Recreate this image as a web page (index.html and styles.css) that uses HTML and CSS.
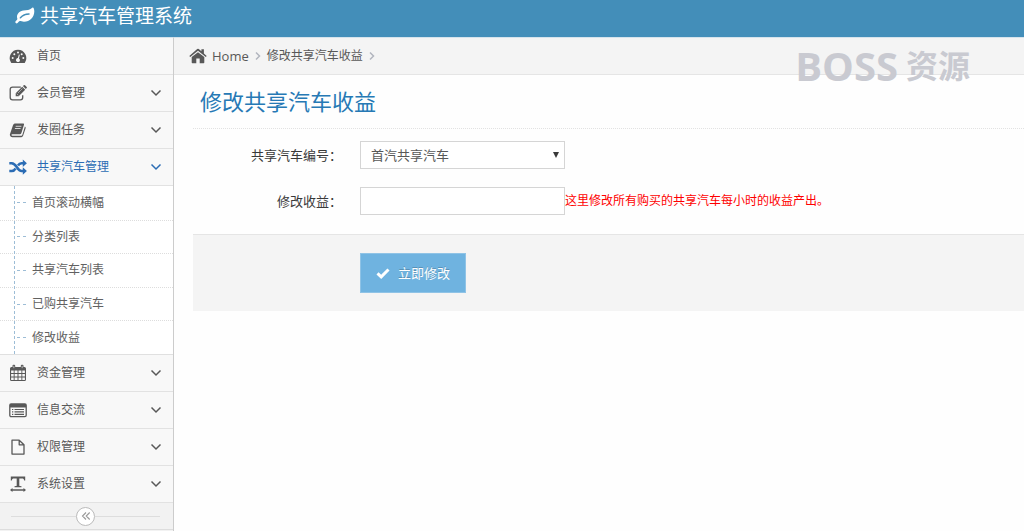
FILE: index.html
```html
<!DOCTYPE html>
<html lang="zh-CN">
<head>
<meta charset="utf-8">
<meta name="viewport" content="width=device-width, initial-scale=1">
<title>共享汽车管理系统</title>
<link rel="stylesheet" href="styles.css">
</head>
<body>
<svg class="sprite" aria-hidden="true">
  <symbol id="chevron" viewBox="0 0 12 12"><path d="M1.500 3.500 6 8l4.500-4.500" fill="none" stroke="currentColor" stroke-width="1.500"/></symbol>
  <symbol id="angle" viewBox="0 0 6 10"><path d="M1 1.500 4.500 5 1 8.500" fill="none" stroke="currentColor" stroke-width="1.500"/></symbol>
</svg>

<header class="navbar">
  <a class="brand" href="#">
    <svg class="leaf" viewBox="0 0 20 18" aria-hidden="true"><path fill="currentColor" fill-rule="evenodd" d="M17.800.5c.9 0 1.500 2 1.500 4 0 5.800-4.500 10.300-10.300 10.300-1.700 0-3.200-.7-4.200-.7-1.200 0-1.900 2.400-3 2.400C1 16.500.3 15.600.3 15c0-1.200 2.100-2 2.100-3C2.400 11.700 2 10.800 2 9.800c0-3.600 3-5.700 6.400-6.300C11.500 3 15 3.300 16.600 1.300c.4-.4.6-.8 1.200-.8ZM14 6.300c-4.200.1-6.500 1.300-9.100 4-.6.700-.1 1.600.7 1.200.4-.2 1.400-1.300 1.900-1.700 2-1.500 3.700-2 6.500-2.100 1-.1 1-1.400 0-1.400Z"/></svg>
    <span>共享汽车管理系统</span>
  </a>
</header>

<div class="layout">
  <aside class="sidebar">
    <nav>
      <ul class="menu">
        <li><a class="item" href="#">
          <svg class="icon" viewBox="0 0 18 18" aria-hidden="true"><path fill="currentColor" d="M2 15.500A8.300 8.300 0 0 1 9 2.800a8.300 8.300 0 0 1 7 12.700q-.3.500-.8.500H2.800q-.5 0-.8-.5Z"/><g fill="#f8f8f8"><circle cx="3.700" cy="11" r="1"/><circle cx="5.300" cy="7.300" r="1"/><circle cx="9" cy="5.600" r="1"/><circle cx="12.700" cy="7.300" r="1"/><circle cx="14.300" cy="11" r="1"/><path d="m9.900 7.500.9.300-.8 3.600a2 2 0 1 1-1.100-.3Z"/></g></svg>
          <span>首页</span></a></li>
        <li><a class="item" href="#">
          <svg class="icon" viewBox="0 0 18 18" aria-hidden="true"><path fill="none" stroke="currentColor" stroke-width="1.300" d="M11.800 3.200H3.600Q1.200 3.200 1.200 5.500v8q0 2.300 2.400 2.300h7.800q2.300 0 2.300-2.300v-2.200"/><path fill="currentColor" d="m6.700 9.300 6.500-6.500 3 3-6.500 6.500h-3Zm7.200-7.200.9-.9q.6-.5 1.200 0l1.700 1.700q.5.600 0 1.200l-.9.900Z"/><path fill="none" stroke="#f8f8f8" stroke-width=".5" d="m9 9 4.500-4.500M7.700 9.700l1.600 1.600"/></svg>
          <span>会员管理</span><svg class="chevron"><use href="#chevron"/></svg></a></li>
        <li><a class="item" href="#">
          <svg class="icon" viewBox="0 0 18 18" aria-hidden="true"><path fill="currentColor" d="M5.600 2.500h8.600q1.200 0 .8 1.200l-2.700 8.500q-.4 1-1.400 1H3.300q-.8 0-.9.600 0 .9 1.200.9h8.800q.7 0 .9-.7l2.600-8.400q1.100.5.700 1.700l-2.500 7.500q-.5 1.400-1.800 1.400H3.400q-2 0-2.500-2-.2-.8.200-1.500l2.800-8.300q.4-1.500 1.700-1.900Z"/><path fill="none" stroke="#f8f8f8" stroke-width=".8" d="M6.700 5.300h5.700M5.900 7.500h5.700"/></svg>
          <span>发圈任务</span><svg class="chevron"><use href="#chevron"/></svg></a></li>
        <li>
          <a class="item active" href="#">
          <svg class="icon" viewBox="0 0 18 18" aria-hidden="true"><path fill="none" stroke="currentColor" stroke-width="2.500" d="M.3 5.200h2.400C7.800 5.200 8 13 12.500 13H15M.3 13h2.400c2 0 3-1 3.900-2.500M9 7.500c.8-1.300 1.700-2.300 3.500-2.300H15"/><path fill="currentColor" d="m13.800 1.500 4.100 3.700-4.100 3.700Zm0 7.800 4.100 3.700-4.100 3.700Z"/></svg>
          <span>共享汽车管理</span><svg class="chevron"><use href="#chevron"/></svg></a>
          <ul class="submenu">
            <li><a href="#">首页滚动横幅</a></li>
            <li><a href="#">分类列表</a></li>
            <li><a href="#">共享汽车列表</a></li>
            <li><a href="#">已购共享汽车</a></li>
            <li><a href="#">修改收益</a></li>
          </ul>
        </li>
        <li><a class="item" href="#">
          <svg class="icon" viewBox="0 0 18 18" aria-hidden="true"><path fill="currentColor" fill-rule="evenodd" d="M2.500 3h1V1.700Q3.500.8 4.500.8h.7q1 0 1 .9V3h5.600V1.700q0-.9 1-.9h.7q1 0 1 .9V3h1q1.500 0 1.500 1.500v11q0 1.500-1.500 1.500h-13Q1 17 1 15.500v-11Q1 3 2.500 3ZM2.100 6.500v2.600h2.600V6.500Zm3.500 0v2.600h2.900V6.500Zm3.900 0v2.600h2.900V6.500Zm3.800 0v2.600h2.600V6.500ZM2.100 10v2.600h2.600V10Zm3.500 0v2.600h2.900V10Zm3.900 0v2.600h2.900V10Zm3.800 0v2.600h2.600V10ZM2.100 13.500v2.400h2.600v-2.400Zm3.500 0v2.400h2.900v-2.400Zm3.900 0v2.400h2.900v-2.400Zm3.800 0v2.400h2.600v-2.400Z"/><path stroke="#f8f8f8" stroke-width=".6" d="M4.850 1.800v2.400m8.300-2.400v2.400"/></svg>
          <span>资金管理</span><svg class="chevron"><use href="#chevron"/></svg></a></li>
        <li><a class="item" href="#">
          <svg class="icon" viewBox="0 0 18 18" aria-hidden="true"><rect x=".8" y="3" width="16.400" height="12.600" rx="1.300" fill="none" stroke="currentColor" stroke-width="1.300"/><path fill="currentColor" d="M1 3h16v3.500H1Z"/><path stroke="currentColor" stroke-width="1.200" d="M3 8.500h1.300m1.200 0H15M3 10.900h1.300m1.200 0H15M3 13.300h1.300m1.200 0H15"/></svg>
          <span>信息交流</span><svg class="chevron"><use href="#chevron"/></svg></a></li>
        <li><a class="item" href="#">
          <svg class="icon" viewBox="0 0 18 18" aria-hidden="true"><path fill="none" stroke="currentColor" stroke-width="1.300" stroke-linejoin="round" d="M3 2.200h7.200l4.800 4.600v9.300H3Zm7.200 0v4.600H15"/></svg>
          <span>权限管理</span><svg class="chevron"><use href="#chevron"/></svg></a></li>
        <li><a class="item" href="#">
          <svg class="icon" viewBox="0 0 18 18" aria-hidden="true"><path fill="currentColor" d="M1.800 1.600h14.400v3.900h-1q-.4-2-1.400-2h-3.500v6.700q0 .8.700.9l1.500.2v.9h-7v-.9l1.500-.2q.7-.1.700-.9V3.500H4.200q-1 0-1.400 2h-1ZM1 15l2.500-2v1.300h11V13l2.500 2-2.500 2v-1.300h-11V17Z"/></svg>
          <span>系统设置</span><svg class="chevron"><use href="#chevron"/></svg></a></li>
      </ul>
    </nav>
    <div class="collapse">
      <button type="button" aria-label="收起菜单"><svg viewBox="0 0 10 10" aria-hidden="true"><path d="M5 1.500 1.500 5 5 8.500M8.700 1.500 5.200 5l3.500 3.500" fill="none" stroke="currentColor" stroke-width="1.100"/></svg></button>
    </div>
  </aside>

  <main class="main">
    <nav class="breadcrumb" aria-label="位置">
      <svg class="home" viewBox="0 0 18 18" aria-hidden="true"><path fill="currentColor" d="M9 5.200 15.300 10v5.500q0 .7-.7.700h-3.900v-4.700H7.300v4.700H3.400q-.7 0-.7-.7V10ZM.3 8.900 8.200 2.100q.8-.6 1.600 0l2.600 2.200V2.200h2.500v4.300l2.800 2.400-.9 1.200L9 3.800 1.200 10.100Z"/></svg>
      <a href="#">Home</a>
      <svg class="angle"><use href="#angle"/></svg>
      <a class="page" href="#">修改共享汽车收益</a>
      <svg class="angle"><use href="#angle"/></svg>
    </nav>
    <div class="content">
      <h1>修改共享汽车收益</h1>
      <form>
        <div class="row">
          <label for="car">共享汽车编号：</label>
          <div class="select-wrap">
            <select id="car"><option>首汽共享汽车</option></select>
            <svg class="arrow" viewBox="0 0 6 6" aria-hidden="true"><path d="M0 0h6L3 6Z" fill="currentColor"/></svg>
          </div>
        </div>
        <div class="row">
          <label for="income">修改收益：</label>
          <input id="income" type="text" aria-describedby="hint">
          <span class="hint" id="hint">这里修改所有购买的共享汽车每小时的收益产出。</span>
        </div>
        <div class="actions">
          <button class="submit" type="button">
            <svg viewBox="0 0 14 14" aria-hidden="true"><path d="m1.500 7.300 3.700 3.500L12.500 3.500" fill="none" stroke="currentColor" stroke-width="3"/></svg>
            <span>立即修改</span>
          </button>
        </div>
      </form>
    </div>
  </main>
</div>
<div class="watermark"><span>BOSS</span><span class="cjk">资源</span></div>
</body>
</html>
```

FILE: styles.css
```css
* { box-sizing: border-box; }
body {
  margin: 0;
  min-height: 100vh;
  display: flex;
  flex-direction: column;
  position: relative;
  background: #fefefe;
  color: #585858;
  font: 12px/18px "Open Sans", "Noto Sans CJK SC", sans-serif;
}
a { color: inherit; text-decoration: none; }
ul { list-style: none; margin: 0; padding: 0; }
svg { flex: none; }
.sprite { display: none; }

.navbar {
  height: 37px;
  padding: 0 15px;
  display: flex;
  align-items: center;
  background: #438eb9;
}
.brand {
  display: flex;
  align-items: center;
  gap: 5px;
  padding-bottom: 5px;
  color: #fff;
  font-size: 19px;
  line-height: 28px;
}
.leaf { width: 20px; height: 18px; }

.layout { flex: 1; display: flex; }
.sidebar {
  width: 174px;
  flex: none;
  background: #f2f2f2;
  border-right: 1px solid #ccc;
  border-top: 1px solid #d5e3ec;
}
.item {
  height: 37px;
  padding: 0 11px 0 9px;
  display: flex;
  align-items: center;
  background: #f8f8f8;
  border-bottom: 1px solid #e2e2e2;
}
.item.active { color: #2b6cb4; }
.icon { width: 18px; height: 18px; margin-right: 10px; }
.chevron { width: 12px; height: 12px; margin-left: auto; }
.submenu {
  height: 169px;
  display: grid;
  grid-template-rows: repeat(5, 1fr);
  background: #fff;
  border-bottom: 1px solid #e0e0e0;
  position: relative;
}
.submenu::before {
  content: "";
  position: absolute;
  top: 0;
  bottom: 0;
  left: 14px;
  border-left: 1px dashed #9dbdd6;
}
.submenu li { display: flex; }
.submenu li + li { border-top: 1px dotted #ddd; }
.submenu a {
  flex: 1;
  display: flex;
  align-items: center;
  gap: 6px;
  padding-left: 17px;
  color: #616161;
}
.submenu a::before {
  content: "";
  width: 9px;
  border-top: 1px dashed #9dbdd6;
}
.collapse {
  height: 27px;
  padding: 0 13px 0 11px;
  display: flex;
  align-items: center;
  border-bottom: 1px solid #ddd;
}
.collapse::before, .collapse::after {
  content: "";
  flex: 1;
  border-top: 1px solid #ddd;
}
.collapse button {
  width: 19px;
  height: 19px;
  padding: 0;
  display: flex;
  align-items: center;
  justify-content: center;
  color: #999;
  background: #fff;
  border: 1px solid #bbb;
  border-radius: 50%;
}
.collapse svg { width: 10px; height: 10px; }

.main { flex: 1; min-width: 0; }
.breadcrumb {
  height: 38px;
  padding-left: 15px;
  display: flex;
  align-items: center;
  background: #f4f4f4;
  border-top: 1px solid #d5e3ec;
  border-bottom: 1px solid #e5e5e5;
  font-size: 13px;
}
.home { width: 18px; height: 18px; margin-right: 5px; }
.angle { width: 6px; height: 10px; margin: 0 6px; color: #b2b6bf; }
.page { font-size: 12px; }
.content { padding-left: 19px; }
h1 {
  margin: 0 0 12px;
  padding: 10px 7px 11px;
  border-bottom: 1px dotted #e2e2e2;
  color: #2679b5;
  font-size: 22px;
  font-weight: 400;
  line-height: 32px;
}
.row {
  display: flex;
  align-items: center;
  margin-bottom: 18px;
  color: #393939;
}
.row:nth-child(2) { margin-bottom: 19px; }
.row label {
  width: 149px;
  margin-right: 18px;
  text-align: right;
  font-size: 13px;
}
.select-wrap { position: relative; display: flex; }
select, input {
  width: 205px;
  height: 28px;
  padding: 0 10px;
  appearance: none;
  background: #fff;
  border: 1px solid #d5d5d5;
  border-radius: 0;
  color: #585858;
  font: inherit;
  font-size: 13px;
}
.arrow {
  position: absolute;
  right: 6px;
  top: 11px;
  width: 6px;
  height: 6px;
  color: #393939;
  pointer-events: none;
}
.hint { color: #f00; }
.actions {
  padding: 18px 0 18px 167px;
  background: #f4f4f4;
  border-top: 1px solid #e5e5e5;
}
.submit {
  height: 40px;
  padding: 0 15px;
  display: flex;
  align-items: center;
  gap: 8px;
  border: 1px solid #8fc3e6;
  background: #6fb3e0;
  color: #fff;
  font: inherit;
  font-size: 13px;
  text-shadow: 0 -1px 0 rgba(0, 0, 0, .2);
}
.submit svg { width: 14px; height: 14px; }

.watermark {
  position: absolute;
  top: 46px;
  right: 54px;
  display: flex;
  align-items: center;
  gap: 8px;
  color: #c9cad1;
  font-size: 40px;
  font-weight: 700;
  line-height: 40px;
  pointer-events: none;
}
.watermark .cjk { font-size: 32px; }
```
